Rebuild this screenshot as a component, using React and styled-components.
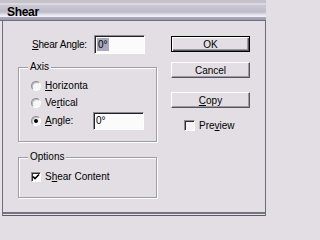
import React from 'react';
import styled, { createGlobalStyle } from 'styled-components';

const Global = createGlobalStyle`
  html, body { margin: 0; padding: 0; background: #e3dee3; }
  body { font-family: "Liberation Sans", Arial, sans-serif; font-size: 10px; color: #000; }
  u { text-underline-offset: 1px; }
`;

const Window = styled.div`
  width: 266px;
  height: 216px;
  display: flex;
  flex-direction: column;
  overflow: hidden;
  background: #e3dee3;
`;

const TitleBar = styled.div`
  height: 21px;
  flex: none;
  box-sizing: border-box;
  padding: 5px 0 0 7px;
  font-size: 12px;
  font-weight: bold;
  line-height: 14px;
  letter-spacing: -0.3px;
  background: linear-gradient(to bottom,
    #c5c2cc 0px, #c5c2cc 3px,
    #dad8e0 3px, #dad8e0 5px,
    #cac8d2 5px, #bebcca 12px,
    #e6e6ee 15px, #f3f3f7 17px,
    #aeacbd 17px, #9a98ad 20px,
    #6f6d7e 20px, #6f6d7e 21px);
`;

const Body = styled.div`
  flex: 1;
  display: flex;
  padding: 14px 0 0 18px;
  box-shadow:
    inset 2px 0 0 #e6e2e8,
    inset 3px 0 0 #6f6c79,
    inset -1px 0 0 #6f6c79,
    inset 0 -1px 0 #5d5b68,
    inset 0 -2px 0 #e6e2e8,
    inset 0 -4px 0 #767382;
`;

const LeftCol = styled.div`
  width: 139px;
  display: flex;
  flex-direction: column;
`;

const RightCol = styled.div`
  width: 79px;
  margin-left: 14px;
  display: flex;
  flex-direction: column;
`;

const FieldRow = styled.div`
  height: 19px;
  display: flex;
  align-items: center;
`;

const FieldLabel = styled.span`
  padding-left: 14px;
  width: 76px;
  flex: none;
  box-sizing: border-box;
  white-space: nowrap;
  letter-spacing: -0.2px;
`;

const TextBox = styled.div`
  box-sizing: border-box;
  width: 51px;
  flex: none;
  height: ${p => p.$h || 19}px;
  background: #fbfbfb;
  border: 1px solid;
  border-color: #8d8a94 #ffffff #ffffff #8d8a94;
  box-shadow: inset 1px 1px 0 #222028;
  display: flex;
  align-items: center;
  padding-left: 2px;
  font-size: 10px;
`;

const Selected = styled.span`
  background: #a9a8bc;
  padding: 0 1px;
  line-height: 13px;
`;

const Group = styled.div`
  position: relative;
  box-sizing: border-box;
  height: ${p => p.$h}px;
  margin-top: ${p => p.$mt}px;
  border: 1px solid #a09ca7;
  box-shadow: inset 1px 1px 0 #ffffff, 1px 1px 0 #ffffff;
  padding: ${p => p.$pt}px 0 0 12px;
  display: flex;
  flex-direction: column;
`;

const Legend = styled.span`
  position: absolute;
  top: -7px;
  left: 9px;
  padding: 0 2px;
  line-height: 12px;
  background: #e3dee3;
`;

const OptionRow = styled.div`
  height: ${p => p.$h || 17}px;
  display: flex;
  align-items: center;
`;

const Radio = styled.span`
  flex: none;
  width: 10px;
  height: 10px;
  box-sizing: border-box;
  border-radius: 50%;
  background: #f6f5f7;
  border: 1px solid;
  border-color: #8f8c96 #ffffff #ffffff #8f8c96;
  box-shadow: inset 1px 1px 0 #b9b6bf;
  display: flex;
  align-items: center;
  justify-content: center;
  &::after {
    content: '';
    width: 4px;
    height: 4px;
    border-radius: 50%;
    background: #000;
    display: ${p => (p.$checked ? 'block' : 'none')};
  }
`;

const OptionLabel = styled.span`
  margin-left: 4px;
  white-space: nowrap;
  width: ${p => (p.$w ? `${p.$w}px` : 'auto')};
  flex: none;
`;

const Box = styled.span`
  flex: none;
  width: ${p => p.$s}px;
  height: ${p => p.$s}px;
  box-sizing: border-box;
  background: ${p => (p.$checked ? '#ffffff' : '#f4f2f5')};
  border: 1px solid;
  border-color: #8f8c96 #ffffff #ffffff #8f8c96;
  box-shadow: inset 1px 1px 0 #2c2a32;
  display: flex;
  align-items: center;
  justify-content: center;
`;

const Button = styled.div`
  box-sizing: border-box;
  height: 16px;
  margin-top: ${p => p.$mt}px;
  display: flex;
  align-items: center;
  justify-content: center;
  background: #e3dee3;
  border: 1px solid;
  border-color: ${p => (p.$default ? '#000 #000 #000 #000' : '#ffffff #55535e #55535e #ffffff')};
  box-shadow: ${p => (p.$default
    ? 'inset 1px 1px 0 #ffffff, inset -1px -1px 0 #55535e, inset -2px -2px 0 #9d99a4'
    : 'inset -1px -1px 0 #9d99a4')};
  font-size: 10px;
`;

const PreviewRow = styled.div`
  margin-top: 12px;
  height: 11px;
  padding-left: 13px;
  display: flex;
  align-items: center;
`;

const Check = () => (
  <svg width="8" height="8" viewBox="0 0 8 8">
    <path d="M1 3.5 L3 5.5 L7 1.5" fill="none" stroke="#000" strokeWidth="1.6" />
  </svg>
);

export default function App() {
  return (
    <Window>
      <Global />
      <TitleBar>Shear</TitleBar>
      <Body>
        <LeftCol>
          <FieldRow>
            <FieldLabel><u>S</u>hear Angle:</FieldLabel>
            <TextBox><Selected>0°</Selected></TextBox>
          </FieldRow>
          <Group $h={75} $mt={13} $pt={9}>
            <Legend>Axis</Legend>
            <OptionRow>
              <Radio />
              <OptionLabel><u>H</u>orizonta</OptionLabel>
            </OptionRow>
            <OptionRow>
              <Radio />
              <OptionLabel>Ve<u>r</u>tical</OptionLabel>
            </OptionRow>
            <OptionRow $h={19}>
              <Radio $checked />
              <OptionLabel $w={48}><u>A</u>ngle:</OptionLabel>
              <TextBox $h={18}>0°</TextBox>
            </OptionRow>
          </Group>
          <Group $h={41} $mt={15} $pt={12}>
            <Legend>Options</Legend>
            <OptionRow $h={13}>
              <Box $s={10} $checked><Check /></Box>
              <OptionLabel>S<u>h</u>ear Content</OptionLabel>
            </OptionRow>
          </Group>
        </LeftCol>
        <RightCol>
          <Button $default $mt={1}>OK</Button>
          <Button $mt={10}>Cancel</Button>
          <Button $mt={14}><u>C</u>opy</Button>
          <PreviewRow>
            <Box $s={11} />
            <OptionLabel>Pre<u>v</u>iew</OptionLabel>
          </PreviewRow>
        </RightCol>
      </Body>
    </Window>
  );
}
